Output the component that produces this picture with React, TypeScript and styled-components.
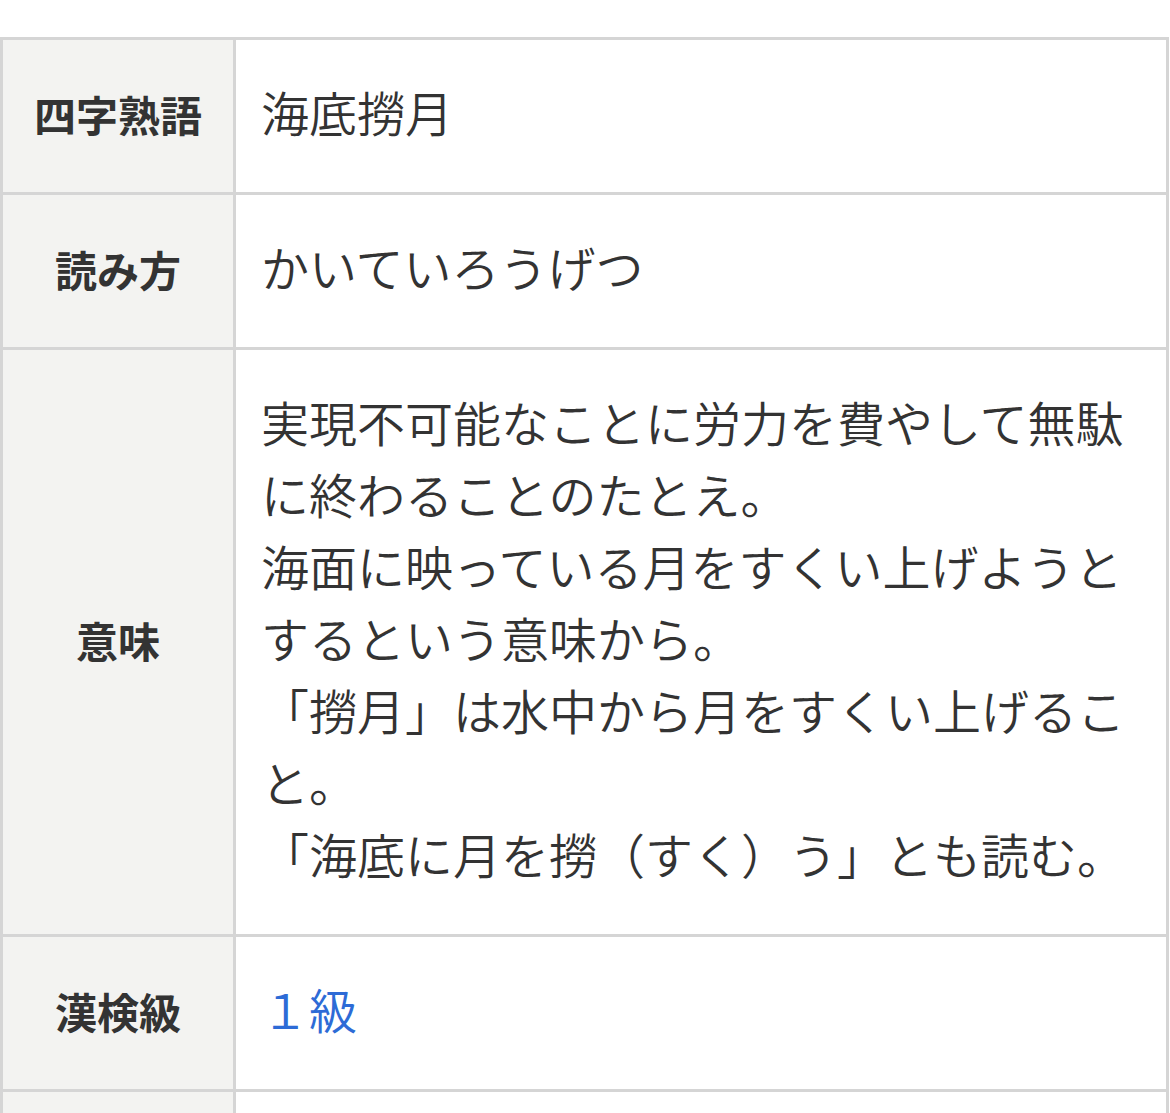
import { createGlobalStyle, styled } from 'styled-components';

const GlobalStyle = createGlobalStyle`
  body {
    margin: 0;
    background: #fff;
    font-family: "Noto Sans CJK JP", "Noto Sans", sans-serif;
    color: #333;
  }
`;

const Table = styled.table`
  margin-top: 37px;
  width: 1169px;
  border-collapse: separate;
  border-spacing: 0;
`;

const Label = styled.th`
  width: 230px;
  background: #f3f3f1;
  border-top: 3px solid #d5d5d5;
  border-left: 3px solid #d5d5d5;
  padding: 0 0 5px;
  font-size: 42px;
  font-weight: 700;
  color: #333;
  text-align: center;
  vertical-align: middle;
`;

const Value = styled.td<{ $link?: boolean }>`
  border-top: 3px solid #d5d5d5;
  border-left: 3px solid #d5d5d5;
  border-right: 3px solid #d5d5d5;
  padding: 35px 25px 45px;
  font-size: 48px;
  line-height: 72px;
  font-weight: 350;
  color: ${({ $link }) => ($link ? '#2d6bd6' : '#333')};
  vertical-align: middle;
`;

const EmptyRow = styled.tr`
  height: 40px;
`;

const rows: { label: string; value: React.ReactNode; link?: boolean }[] = [
  { label: '四字熟語', value: '海底撈月' },
  { label: '読み方', value: 'かいていろうげつ' },
  {
    label: '意味',
    value: (
      <>
        実現不可能なことに労力を費やして無駄に終わることのたとえ。
        <br />
        海面に映っている月をすくい上げようとするという意味から。
        <br />
        「撈月」は水中から月をすくい上げること。
        <br />
        「海底に月を撈（すく）う」とも読む。
      </>
    ),
  },
  { label: '漢検級', value: '１級', link: true },
];

export default function App() {
  return (
    <>
      <GlobalStyle />
      <Table>
        <tbody>
          {rows.map((r) => (
            <tr key={r.label}>
              <Label>{r.label}</Label>
              <Value $link={r.link}>{r.value}</Value>
            </tr>
          ))}
          <EmptyRow>
            <Label />
            <Value />
          </EmptyRow>
        </tbody>
      </Table>
    </>
  );
}
